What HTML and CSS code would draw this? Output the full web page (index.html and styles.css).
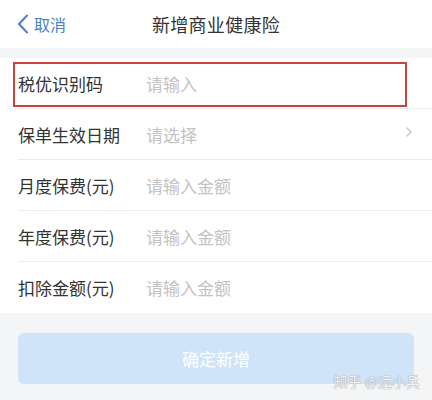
FILE: index.html
```html
<!DOCTYPE html>
<html lang="zh-CN">
<head>
<meta charset="utf-8">
<link rel="stylesheet" href="styles.css">
</head>
<body>
<div class="page">
  <header class="nav">
    <div class="back">
      <svg class="back-icon" width="12" height="20" viewBox="0 0 12 20"><path d="M10 1.5 L2 10 L10 18.5" fill="none" stroke="#4a7fc6" stroke-width="2" stroke-linecap="round" stroke-linejoin="round"/></svg>
      <span>取消</span>
    </div>
    <div class="title">新增商业健康险</div>
    <div></div>
  </header>
  <div class="gap"></div>
  <main class="form">
    <div class="row row-marked">
      <span class="label">税优识别码</span><span class="ph">请输入</span>
      <div class="mark"></div>
    </div>
    <div class="row">
      <span class="label">保单生效日期</span><span class="ph">请选择</span>
      <svg class="arrow" width="8" height="12" viewBox="0 0 8 12"><path d="M2 2 L6 6 L2 10" fill="none" stroke="#c4c4c4" stroke-width="1.4" stroke-linecap="round" stroke-linejoin="round"/></svg>
    </div>
    <div class="row"><span class="label">月度保费(元)</span><span class="ph">请输入金额</span></div>
    <div class="row"><span class="label">年度保费(元)</span><span class="ph">请输入金额</span></div>
    <div class="row last"><span class="label">扣除金额(元)</span><span class="ph">请输入金额</span></div>
  </main>
  <footer class="foot">
    <div class="btn">确定新增</div>
    <div class="wm">知乎 @远小兵</div>
  </footer>
</div>
</body>
</html>
```
FILE: styles.css
```css
html, body { margin: 0; padding: 0; }
body {
  width: 432px;
  height: 400px;
  overflow: hidden;
  font-family: "Noto Sans CJK SC", "Noto Sans", sans-serif;
  background: #f4f5f7;
}
.page { display: flex; flex-direction: column; height: 400px; }
.nav {
  height: 48px;
  background: #fff;
  display: grid;
  grid-template-columns: 1fr auto 1fr;
  align-items: center;
}
.back {
  display: flex;
  align-items: center;
  gap: 5px;
  padding-left: 17px;
  color: #4a7fc6;
  font-size: 16px;
}
.back-icon { display: block; }
.title { font-size: 18px; color: #333; letter-spacing: 0.3px; }
.gap { height: 10px; background: #f3f5f7; }
.form { background: #fff; }
.row {
  position: relative;
  height: 51px;
  display: flex;
  align-items: center;
  margin-left: 18px;
  border-bottom: 1px solid #ececec;
  box-sizing: border-box;
}
.row.last { border-bottom: none; }
.label { width: 128px; font-size: 17px; color: #333; }
.ph { font-size: 17px; color: #c3c3c3; }
.arrow { position: absolute; right: 19px; top: 17px; }
.mark {
  position: absolute;
  left: -5px;
  top: 4px;
  width: 394px;
  height: 45px;
  box-sizing: border-box;
  border: 2px solid #c8453f;
}
.foot {
  position: relative;
  flex: 1;
  background: #f4f5f7;
  padding: 20px 18px 0;
}
.btn {
  height: 51px;
  border-radius: 6px;
  background: #d0e4f9;
  color: #fff;
  font-size: 17px;
  display: flex;
  align-items: center;
  justify-content: center;
}
.wm {
  position: absolute;
  right: 12px;
  bottom: 9px;
  font-size: 14px;
  color: rgba(255,255,255,0.9);
  text-shadow: 0 0 1px #999, 0 0 1px #999;
}
```
